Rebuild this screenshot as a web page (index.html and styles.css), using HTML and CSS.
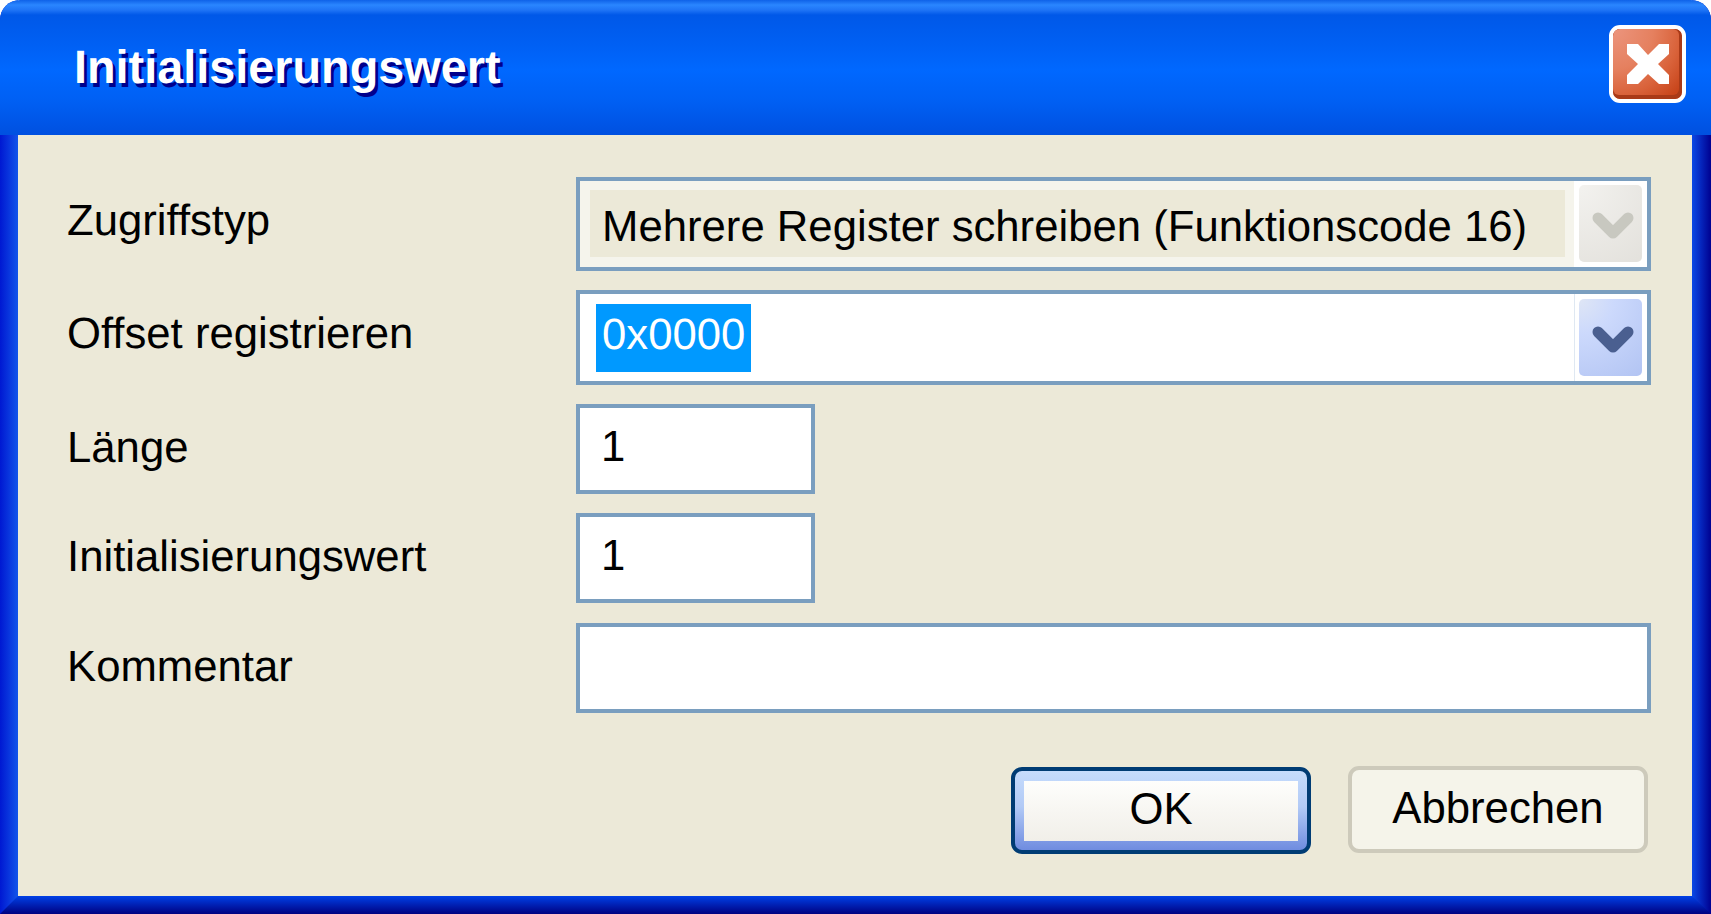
FILE: index.html
```html
<!DOCTYPE html>
<html lang="de">
<head>
<meta charset="utf-8">
<title>Initialisierungswert</title>
<link rel="stylesheet" href="styles.css">
</head>
<body>
<div class="window">
  <header class="titlebar">
    <h1 class="title">Initialisierungswert</h1>
    <button class="close" aria-label="Schließen">
      <svg viewBox="0 0 69 70" width="69" height="70">
        <defs>
          <radialGradient id="closeFill" cx="0" cy="0" r="1.35">
            <stop offset="0" stop-color="#ec957e"/>
            <stop offset="0.45" stop-color="#e5805f"/>
            <stop offset="0.75" stop-color="#d9623a"/>
            <stop offset="1" stop-color="#c8451b"/>
          </radialGradient>
        </defs>
        <rect width="69" height="70" rx="7" fill="#a93a18"/>
        <rect width="66" height="66" rx="6" fill="url(#closeFill)"/>
        <path class="close-x" d="M14 15 L25 15 L35 26 L46 15 L56 15 L56 25 L45 35 L56 46 L56 55 L46 55 L35 45 L25 55 L14 55 L14 46 L25 35 L14 25 Z"/>
      </svg>
    </button>
  </header>
  <main class="content">
    <div class="form">
      <div class="row row-select">
        <span class="label">Zugriffstyp</span>
        <div class="field select select-disabled">
          <div class="select-value"><span class="value-box">Mehrere Register schreiben (Funktionscode 16)</span></div>
          <div class="select-side">
            <div class="arrow arrow-off">
              <svg viewBox="0 0 42 29" width="42" height="29"><path d="M6 7 L21 22 L36 7" /></svg>
            </div>
          </div>
        </div>
      </div>
      <div class="row row-select row-tall">
        <span class="label">Offset registrieren</span>
        <div class="field select">
          <div class="select-value"><span class="selected">0x0000</span></div>
          <div class="select-side">
            <div class="arrow arrow-on">
              <svg viewBox="0 0 42 29" width="42" height="29"><path d="M6 7 L21 22 L36 7" /></svg>
            </div>
          </div>
        </div>
      </div>
      <div class="row row-input">
        <span class="label">Länge</span>
        <div class="field input-short">1</div>
      </div>
      <div class="row row-input">
        <span class="label">Initialisierungswert</span>
        <div class="field input-short">1</div>
      </div>
      <div class="row row-input row-last">
        <span class="label">Kommentar</span>
        <div class="field input-wide"></div>
      </div>
    </div>
    <div class="actions">
      <button class="btn btn-default"><span class="btn-face">OK</span></button>
      <button class="btn btn-plain">Abbrechen</button>
    </div>
  </main>
  <div class="bottom-frame"></div>
</div>
</body>
</html>
```
FILE: styles.css
```css
html, body {
  margin: 0;
  padding: 0;
  background: #fff;
}
* {
  box-sizing: border-box;
}
.window {
  width: 1711px;
  height: 914px;
  display: flex;
  flex-direction: column;
  border-radius: 20px 20px 0 0;
  overflow: hidden;
  font-family: "Liberation Sans", Arial, sans-serif;
  font-size: 43.7px;
  text-rendering: geometricPrecision;
  color: #000;
  background:
    linear-gradient(to right, #0018d2, #1254ea) left top / 18px 100% no-repeat,
    linear-gradient(to right, #0a48e6, #000090) right top / 19px 100% no-repeat;
}
.titlebar {
  height: 135px;
  flex: none;
  display: flex;
  align-items: flex-start;
  justify-content: space-between;
  padding: 25px 25px 0 74px;
  background: linear-gradient(to bottom,
    #0f62e8 0, #2a86ff 5px, #1f74f6 10px, #0058e8 15px,
    #0060f4 45px, #0068ff 70px, #0060f4 100px, #0050e0 135px);
}
.title {
  margin: 15px 0 0;
  font-size: 46.8px;
  line-height: 54px;
  font-weight: 700;
  color: #fff;
  text-shadow: 3px 4px 0 #00008c;
}
.close {
  width: 77px;
  height: 78px;
  padding: 0;
  border: 4px solid #fff;
  border-radius: 11px;
  background: #c9441c;
  overflow: hidden;
  line-height: 0;
}
.close-x {
  fill: #fff;
}
.content {
  flex: 1;
  margin: 0 19px 0 18px;
  background: #ece9d8;
  display: flex;
  flex-direction: column;
  padding: 42px 41px 0 49px;
}
.form {
  display: flex;
  flex-direction: column;
  gap: 19px;
}
.row {
  display: grid;
  grid-template-columns: 509px 1fr;
  align-items: start;
}
.row-select {
  height: 94px;
}
.row-tall {
  height: 95px;
}
.row-input {
  height: 90px;
}
.row-last {
  margin-top: 1px;
}
.label {
  line-height: 50px;
  padding-top: 19px;
}
.field {
  border: 4px solid #7a9ebf;
  background: #fff;
}
.select {
  height: 100%;
  display: flex;
}
.select-value {
  flex: 1;
  display: flex;
  align-items: center;
  padding: 0 0 0 16px;
}
.select-disabled .select-value {
  background: #f5f4ec;
  padding: 9px 0 10px 10px;
  align-items: stretch;
}
.value-box {
  flex: 1;
  background: #ece9d8;
  padding: 6px 0 0 12px;
  line-height: 61px;
  margin-right: 9px;
}
.selected {
  display: block;
  background: #0099ff;
  color: #fff;
  line-height: 62px;
  padding: 0 6px 6px;
}
.select-side {
  width: 73px;
  flex: none;
  padding: 5px 5px 5px 4px;
  border-left: 1px solid #dfe8f2;
  display: flex;
}
.select-disabled .select-side {
  border-left: 0;
  padding: 4px 5px 5px;
}
.arrow {
  flex: 1;
  border-radius: 5px;
  display: flex;
  align-items: center;
  justify-content: center;
}
.arrow svg {
  margin: 4px 0 0 4px;
}
.arrow svg path {
  fill: none;
  stroke-width: 11;
  stroke-linecap: round;
  stroke-linejoin: round;
}
.arrow-off {
  background: radial-gradient(circle at 0 0, #f3f2ef, #e3e1dc 100%);
}
.arrow-off svg path {
  stroke: #c8c8c0;
}
.arrow-on {
  background: radial-gradient(circle at 0 0, #dfe6f5 0, #ccd9fc 35%, #b2c4f3 100%);
}
.arrow-on svg path {
  stroke: #4a5f90;
}
.input-short {
  width: 239px;
  height: 90px;
  line-height: 78px;
  padding-left: 21px;
}
.input-wide {
  height: 90px;
}
.actions {
  display: flex;
  justify-content: flex-end;
  gap: 37px;
  margin-top: 53px;
  padding-right: 3px;
}
.btn {
  width: 300px;
  height: 87px;
  padding: 0;
  font: inherit;
  color: #000;
}
.btn-default {
  border: 4px solid #003c74;
  border-radius: 11px;
  background: linear-gradient(to bottom, #c6dcfc 0, #b2caf6 45%, #6f8ce0 100%);
  padding: 10px 9px 9px;
  margin-top: 1px;
}
.btn-face {
  display: block;
  height: 100%;
  line-height: 56px;
  background: linear-gradient(to bottom, #fefefc 0, #f7f6f2 50%, #f1efe9 100%);
}
.btn-plain {
  border: 4px solid #cdcabb;
  border-radius: 11px;
  background: #f5f4ea;
  padding-bottom: 4px;
}
.bottom-frame {
  height: 18px;
  flex: none;
  background: linear-gradient(to bottom, #0040e6, #000080);
  clip-path: polygon(0 100%, 18px 0, calc(100% - 19px) 0, 100% 100%);
}
```
